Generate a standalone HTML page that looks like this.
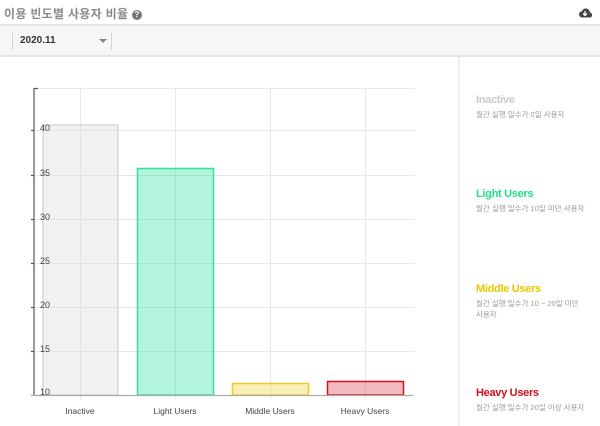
<!DOCTYPE html>
<html><head><meta charset="utf-8"><style>
body{margin:0;width:600px;height:426px;background:#fff;font-family:"Liberation Sans","Noto Sans CJK KR",sans-serif;position:relative;overflow:hidden}
.hd{position:absolute;left:0;top:0;width:600px;height:24px;border-bottom:2px solid #e4e4e4}
.hd .t{position:absolute;left:4px;top:5px;font-size:12px;color:#8a8a8a;font-weight:bold;letter-spacing:0.3px}
.tb{position:absolute;left:0;top:26px;width:600px;height:29px;background:#f6f6f6;border-bottom:2px solid #e6e6e6}
.sep{position:absolute;top:7px;width:1px;height:17px;background:#d4d4d4}
.rp{position:absolute;left:458px;top:57px;width:142px;height:369px;border-left:2px solid #eee}
.lg{position:absolute;left:16px}
.lg b{display:block;font-size:11px;letter-spacing:-0.3px}
.lg span{display:block;font-size:7.5px;color:#999;margin-top:3px;line-height:11px;width:110px}
</style></head><body>
<div class="hd"><div class="t">이용 빈도별 사용자 비율 <span style="display:inline-block;width:10px;height:10px;border-radius:50%;background:#777;color:#fff;font-size:8px;text-align:center;line-height:10px;vertical-align:1px">?</span></div>
<svg style="position:absolute;left:578px;top:7px" width="14" height="11" viewBox="0 0 14 11"><path d="M3.5 10.5h8a2.5 2.5 0 0 0 .3-5A4 4 0 0 0 4 4.2 3.2 3.2 0 0 0 3.5 10.5z" fill="#444"/><path d="M7 4v4M5 6.5l2 2 2-2" stroke="#fff" stroke-width="1.3" fill="none"/></svg></div>
<div class="tb"><div class="sep" style="left:12px"></div><div class="sep" style="left:111px"></div>
<div style="position:absolute;left:20px;top:9px;font-size:10px;font-weight:bold;color:#333">2020.11</div>
<div style="position:absolute;left:99px;top:13px;width:0;height:0;border-left:4px solid transparent;border-right:4px solid transparent;border-top:4px solid #888"></div></div>
<svg style="position:absolute;left:0;top:0" width="458" height="426">
<g stroke="#e8e8e8" stroke-width="1">
<line x1="34" y1="88.5" x2="415" y2="88.5"/><line x1="34" y1="130.5" x2="415" y2="130.5"/><line x1="34" y1="175.5" x2="415" y2="175.5"/><line x1="34" y1="219.5" x2="415" y2="219.5"/><line x1="34" y1="263.5" x2="415" y2="263.5"/><line x1="34" y1="307.5" x2="415" y2="307.5"/><line x1="34" y1="351.5" x2="415" y2="351.5"/>
<line x1="80.5" y1="88" x2="80.5" y2="400"/><line x1="175.5" y1="88" x2="175.5" y2="400"/><line x1="270.5" y1="88" x2="270.5" y2="400"/><line x1="365.5" y1="88" x2="365.5" y2="400"/>
</g>
<rect x="43" y="125" width="75" height="270" fill="rgba(220,220,220,0.4)" stroke="#d8d8d8" stroke-width="1.5"/>
<rect x="137.5" y="168.5" width="76" height="226.5" fill="rgba(0,220,140,0.3)" stroke="#2ee59d" stroke-width="1.5"/>
<rect x="232.5" y="383.5" width="76" height="11.5" fill="rgba(240,210,40,0.35)" stroke="#efcc22" stroke-width="1.5"/>
<rect x="327.5" y="381.5" width="76" height="13.5" fill="rgba(220,30,40,0.3)" stroke="#d0121c" stroke-width="1.5"/>
<g stroke="#555" stroke-width="1.2"><line x1="34" y1="88" x2="34" y2="395.5"/><line x1="34" y1="88.5" x2="38" y2="88.5"/><line x1="31" y1="395.5" x2="413" y2="395.5" stroke="#aaa"/>
<line x1="31" y1="130.5" x2="34" y2="130.5"/><line x1="31" y1="175.5" x2="34" y2="175.5"/><line x1="31" y1="219.5" x2="34" y2="219.5"/><line x1="31" y1="263.5" x2="34" y2="263.5"/><line x1="31" y1="307.5" x2="34" y2="307.5"/><line x1="31" y1="351.5" x2="34" y2="351.5"/></g>
<g font-size="9" fill="#444" font-family="Liberation Sans,sans-serif">
<text x="40" y="131">40</text><text x="40" y="176">35</text><text x="40" y="220">30</text><text x="40" y="264">25</text><text x="40" y="308">20</text><text x="40" y="352">15</text><text x="40" y="395">10</text>
<g text-anchor="middle" font-size="8.5"><text x="80" y="414">Inactive</text><text x="175" y="414">Light Users</text><text x="270" y="414">Middle Users</text><text x="365" y="414">Heavy Users</text></g></g>
</svg>
<div class="rp">
<div class="lg" style="top:37px"><b style="color:#ccc">Inactive</b><span>월간 실행 일수가 0일 사용자</span></div>
<div class="lg" style="top:131px"><b style="color:#1ee28a">Light Users</b><span>월간 실행 일수가 10일 미만 사용자</span></div>
<div class="lg" style="top:226px"><b style="color:#e8c800">Middle Users</b><span>월간 실행 일수가 10 ~ 20일 미만 사용자</span></div>
<div class="lg" style="top:330px"><b style="color:#d0101c">Heavy Users</b><span>월간 실행 일수가 20일 이상 사용자</span></div>
</div>
</body></html>
